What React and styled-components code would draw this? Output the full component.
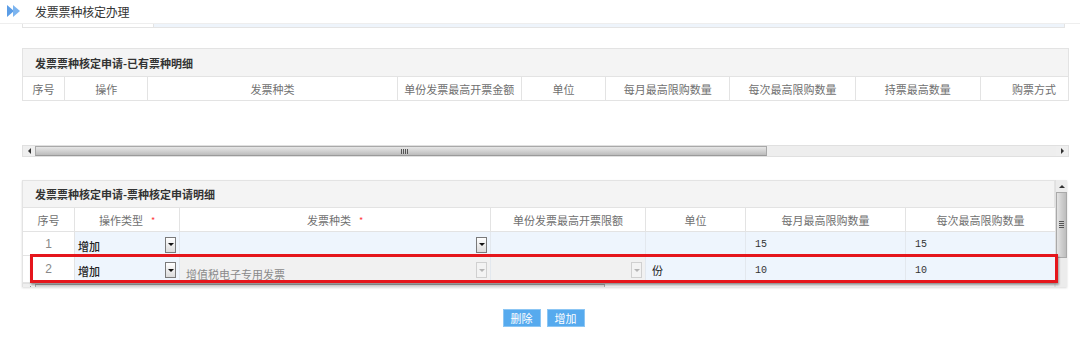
import React from "react";
import styled, { createGlobalStyle } from "styled-components";

const GlobalStyle = createGlobalStyle`
  html, body {
    margin: 0;
    padding: 0;
    background: #fff;
  }
  body {
    font-family: "Noto Sans CJK SC", "Noto Sans", sans-serif;
    color: #333;
  }
`;

const existingCols = [
  { w: 42, text: "序号" },
  { w: 83, text: "操作" },
  { w: 249, text: "发票种类" },
  { w: 124, text: "单份发票最高开票金额" },
  { w: 84, text: "单位" },
  { w: 124, text: "每月最高限购数量" },
  { w: 125, text: "每次最高限购数量" },
  { w: 125, text: "持票最高数量" },
  { w: 88, text: "购票方式", align: "right" },
];

const applyCols = [
  { w: 52, text: "序号" },
  { w: 105, text: "操作类型", required: true },
  { w: 311, text: "发票种类", required: true },
  { w: 155, text: "单份发票最高开票限额" },
  { w: 100, text: "单位" },
  { w: 160, text: "每月最高限购数量" },
  { w: 150, text: "每次最高限购数量" },
];

const rows = [
  { no: 1, op: "增加", kind: "", kindDisabled: false, limit: null, unit: "", month: "15", each: "15" },
  { no: 2, op: "增加", kind: "增值税电子专用发票", kindDisabled: true, limit: "", unit: "份", month: "10", each: "10" },
];

const App = () => {
  return (
    <Page>
      <GlobalStyle />
      <PageHeader>
        <HeaderIcon width="14" height="12" viewBox="0 0 14 12">
          <path d="M0 0 L7 6 L0 12 Z" fill="#5b9de6" />
          <path d="M6 0 L13 6 L6 12 Z" fill="#7cb4ef" />
        </HeaderIcon>
        <PageTitle>发票票种核定办理</PageTitle>
      </PageHeader>
      <TopStrip>
        <StripLeft />
        <StripRight />
      </TopStrip>

      <Panel>
        <PanelTitle>发票票种核定申请-已有票种明细</PanelTitle>
        <Table>
          <colgroup>
            {existingCols.map((c) => (
              <col key={c.text} style={{ width: c.w }} />
            ))}
          </colgroup>
          <tbody>
            <HeadRow $h={24}>
              {existingCols.map((c) => (
                <HeadCell key={c.text} $align={c.align}>
                  {c.text}
                </HeadCell>
              ))}
            </HeadRow>
          </tbody>
        </Table>
        <EmptyBody />
        <HScroll>
          <ScrollArrowH $dir="left" />
          <ScrollThumbH $w={732}>
            <Grip $left={365} />
          </ScrollThumbH>
          <ScrollTrackH>
            <ScrollArrowH $dir="right" />
          </ScrollTrackH>
        </HScroll>
      </Panel>

      <ApplyWrap>
        <ApplyPanel>
          <ApplyMain>
            <PanelTitle $h={27}>发票票种核定申请-票种核定申请明细</PanelTitle>
            <Table>
              <colgroup>
                {applyCols.map((c) => (
                  <col key={c.text} style={{ width: c.w }} />
                ))}
              </colgroup>
              <tbody>
                <HeadRow $h={24}>
                  {applyCols.map((c) => (
                    <HeadCell key={c.text}>
                      {c.text}
                      {c.required && <Required>*</Required>}
                    </HeadCell>
                  ))}
                </HeadRow>
                {rows.map((r) => (
                  <BodyRow key={r.no} $h={r.no === 1 ? 24 : 25}>
                    <NoCell>{r.no}</NoCell>
                    <Cell $bg="blue">
                      <SelectBox>
                        <SelectText>{r.op}</SelectText>
                        <DropButton />
                      </SelectBox>
                    </Cell>
                    <Cell $bg={r.kindDisabled ? "gray" : "blue"}>
                      <SelectBox>
                        <SelectText $disabled={r.kindDisabled}>{r.kind}</SelectText>
                        <DropButton $disabled={r.kindDisabled} />
                      </SelectBox>
                    </Cell>
                    <Cell $bg={r.limit === null ? "blue" : "gray"}>
                      {r.limit !== null && (
                        <SelectBox>
                          <SelectText />
                          <DropButton $disabled />
                        </SelectBox>
                      )}
                    </Cell>
                    <Cell $bg="blue">
                      <Plain>{r.unit}</Plain>
                    </Cell>
                    <Cell $bg="blue">
                      <Num>{r.month}</Num>
                    </Cell>
                    <Cell $bg="blue">
                      <Num>{r.each}</Num>
                    </Cell>
                  </BodyRow>
                ))}
              </tbody>
            </Table>
            <HScroll>
              <ScrollArrowH $dir="left" />
              <ScrollThumbH $w={570}>
                <Grip $left={280} />
              </ScrollThumbH>
              <ScrollTrackH />
            </HScroll>
          </ApplyMain>
          <VScroll>
            <ScrollArrowV />
            <ScrollThumbV>
              <GripV />
            </ScrollThumbV>
            <ScrollTrackV />
          </VScroll>
        </ApplyPanel>
        <Highlight />
      </ApplyWrap>

      <ButtonRow>
        <ActionButton>删除</ActionButton>
        <ActionButton>增加</ActionButton>
      </ButtonRow>
    </Page>
  );
};

const Page = styled.div`
  width: 1080px;
  height: 341px;
  overflow: hidden;
  background: #fff;
`;

const PageHeader = styled.div`
  display: flex;
  align-items: center;
  gap: 14px;
  height: 24px;
  padding-left: 7px;
  border-bottom: 1px solid #eeeeee;
  box-sizing: border-box;
`;

const HeaderIcon = styled.svg`
  display: block;
  margin-top: -1px;
`;

const PageTitle = styled.span`
  font-size: 12px;
  color: #333;
  letter-spacing: -0.2px;
`;

const TopStrip = styled.div`
  display: flex;
  height: 4px;
  margin: 0 15px 0 22px;
  border: 1px solid #e4e4e4;
  border-top: none;
  box-sizing: border-box;
`;

const StripLeft = styled.div`
  width: 130px;
  border-right: 1px solid #e4e4e4;
  background: #fff;
`;

const StripRight = styled.div`
  flex: 1;
  background: #eef4fb;
`;

const Panel = styled.div`
  width: 1047px;
  margin: 20px 0 0 22px;
`;

const PanelTitle = styled.div`
  height: ${(p) => p.$h || 28}px;
  box-sizing: border-box;
  display: flex;
  align-items: center;
  padding-left: 12px;
  background: #f4f4f4;
  border: 1px solid #e3e3e3;
  border-bottom: none;
  font-size: 11px;
  font-weight: bold;
  color: #333;
`;

const Table = styled.table`
  table-layout: fixed;
  border-collapse: collapse;
  width: 100%;
`;

const HeadRow = styled.tr`
  height: ${(p) => p.$h}px;
  background: #fff;
`;

const HeadCell = styled.td`
  border: 1px solid #e3e3e3;
  padding: 0 ${(p) => (p.$align === "right" ? "12px" : "0")} 0 0;
  font-size: 11px;
  color: #707070;
  text-align: ${(p) => p.$align || "center"};
  white-space: nowrap;
  overflow: hidden;
`;

const Required = styled.span`
  color: #ff3b3b;
  margin-left: 8px;
  font-size: 9px;
  vertical-align: 1px;
`;

const EmptyBody = styled.div`
  height: 44px;
`;

const HScroll = styled.div`
  display: flex;
  height: 12px;
  background: #ececec;
  border: 1px solid #e0e0e0;
  box-sizing: border-box;
`;

const ScrollArrowH = styled.div`
  width: 12px;
  flex-shrink: 0;
  display: flex;
  align-items: center;
  justify-content: center;
  background: #efefef;

  &::after {
    content: "";
    border-top: 3px solid transparent;
    border-bottom: 3px solid transparent;
    ${(p) =>
      p.$dir === "right"
        ? "border-left: 3px solid #333;"
        : "border-right: 3px solid #333;"}
  }
`;

const ScrollThumbH = styled.div`
  position: relative;
  flex-shrink: 0;
  width: ${(p) => p.$w}px;
  background: linear-gradient(#e6e6e6, #d4d4d4 45%, #bcbcbc);
  border: 1px solid #a9a9a9;
  border-bottom-color: #9a9a9a;
  box-sizing: border-box;
`;

const Grip = styled.span`
  position: absolute;
  top: 2px;
  left: ${(p) => p.$left}px;
  width: 7px;
  height: 5px;
  background: repeating-linear-gradient(
    90deg,
    #555 0,
    #555 1px,
    transparent 1px,
    transparent 2px
  );
`;

const ScrollTrackH = styled.div`
  flex: 1;
  display: flex;
  justify-content: flex-end;
  background: #eeeeee;
`;

const ApplyWrap = styled.div`
  position: relative;
  width: 1045px;
  margin: 23px 0 0 22px;
`;

const ApplyPanel = styled.div`
  display: flex;
  height: 107px;
  overflow: hidden;
  box-shadow: 0 1px 2px rgba(0, 0, 0, 0.15);
`;

const ApplyMain = styled.div`
  width: 1033px;
  flex-shrink: 0;
`;

const BodyRow = styled.tr`
  height: ${(p) => p.$h}px;
`;

const bgColors = {
  blue: "#eef5fd",
  gray: "#f1f1f1",
  white: "#fff",
};

const Cell = styled.td`
  border: 1px solid #e3e8ee;
  padding: 0;
  background: ${(p) => bgColors[p.$bg] || "#fff"};
  overflow: hidden;
`;

const NoCell = styled.td`
  border: 1px solid #e3e3e3;
  background: #fff;
  text-align: center;
  font-family: "Liberation Sans", sans-serif;
  font-size: 12px;
  color: #888;
`;

const SelectBox = styled.div`
  display: flex;
  align-items: center;
  justify-content: space-between;
  height: 100%;
  padding: 0 3px 0 3px;
`;

const SelectText = styled.span`
  font-size: 11px;
  color: ${(p) => (p.$disabled ? "#8a8a8a" : "#222")};
  font-weight: ${(p) => (p.$disabled ? "normal" : "500")};
  padding-top: ${(p) => (p.$disabled ? "10px" : "4px")};
  padding-left: ${(p) => (p.$disabled ? "3px" : "0")};
`;

const DropButton = styled.div`
  width: 11px;
  height: 16px;
  box-sizing: border-box;
  border: 1px solid ${(p) => (p.$disabled ? "#d0d0d0" : "#7a7a7a")};
  background: ${(p) =>
    p.$disabled ? "#f3f3f3" : "linear-gradient(#ffffff, #dcdcdc)"};
  display: flex;
  align-items: center;
  justify-content: center;
  margin-top: 2px;

  &::after {
    content: "";
    border-left: 3px solid transparent;
    border-right: 3px solid transparent;
    border-top: 3px solid ${(p) => (p.$disabled ? "#b5b5b5" : "#111")};
  }
`;

const Plain = styled.span`
  display: block;
  padding: 2px 0 0 6px;
  font-size: 11px;
  color: #222;
`;

const Num = styled.span`
  display: block;
  padding: 2px 0 0 9px;
  font-family: "Liberation Mono", monospace;
  font-size: 10px;
  color: #333;
`;

const VScroll = styled.div`
  width: 11px;
  display: flex;
  flex-direction: column;
  background: #ececec;
  border-left: 1px solid #e0e0e0;
`;

const ScrollArrowV = styled.div`
  height: 12px;
  display: flex;
  align-items: center;
  justify-content: center;

  &::after {
    content: "";
    border-left: 3px solid transparent;
    border-right: 3px solid transparent;
    border-bottom: 3px solid #333;
  }
`;

const ScrollThumbV = styled.div`
  position: relative;
  height: 66px;
  box-sizing: border-box;
  background: linear-gradient(90deg, #e4e4e4, #cfcfcf 50%, #bdbdbd);
  border: 1px solid #a9a9a9;
`;

const GripV = styled.span`
  position: absolute;
  top: 28px;
  left: 2px;
  width: 5px;
  height: 7px;
  background: repeating-linear-gradient(
    180deg,
    #555 0,
    #555 1px,
    transparent 1px,
    transparent 2px
  );
`;

const ScrollTrackV = styled.div`
  flex: 1;
`;

const Highlight = styled.div`
  position: absolute;
  left: 8px;
  top: 74px;
  width: 1028px;
  height: 29px;
  box-sizing: border-box;
  border: 3px solid #e5161c;
  box-shadow: 1px 2px 2px rgba(0, 0, 0, 0.35);
  pointer-events: none;
`;

const ButtonRow = styled.div`
  display: flex;
  justify-content: center;
  gap: 6px;
  margin-top: 22px;
  padding-left: 7px;
`;

const ActionButton = styled.button`
  width: 38px;
  height: 18px;
  padding: 0;
  border: 1px solid #8cc6f4;
  background: #56aaee;
  color: #fff;
  font-family: "Noto Sans CJK SC", sans-serif;
  font-size: 11px;
  line-height: 16px;
  cursor: pointer;
`;

export default App;
